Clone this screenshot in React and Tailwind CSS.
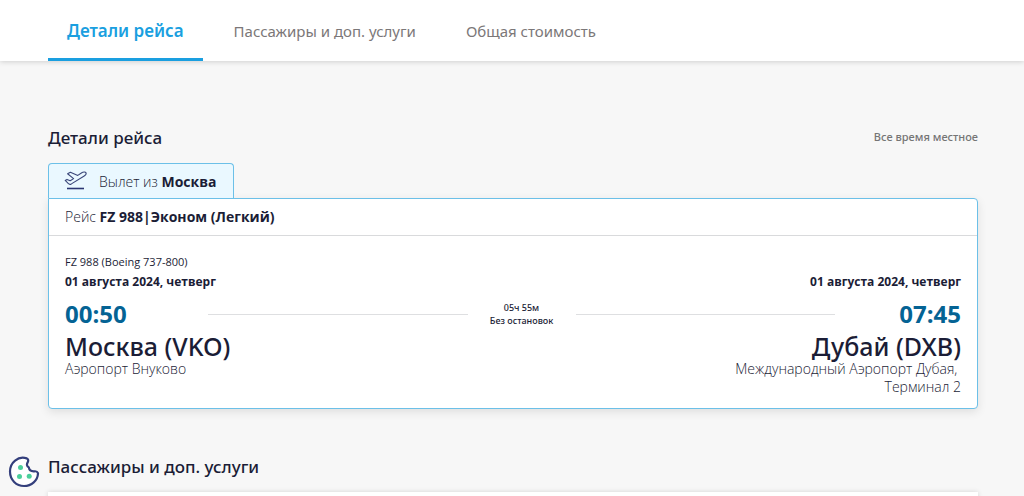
import React, { useState } from "react";

const tabs = ["Детали рейса", "Пассажиры и доп. услуги", "Общая стоимость"];

const flight = {
  number: "FZ 988",
  cabin: "Эконом (Легкий)",
  aircraft: "FZ 988 (Boeing 737-800)",
  duration: "05ч 55м",
  stops: "Без остановок",
  from: {
    date: "01 августа 2024, четверг",
    time: "00:50",
    city: "Москва (VKO)",
  },
  to: {
    date: "01 августа 2024, четверг",
    time: "07:45",
    city: "Дубай (DXB)",
  },
};

const PlaneIcon = () => (
  <svg width="24" height="20" viewBox="0 0 24 20" fill="none" stroke="#3a4679" aria-hidden="true">
    <path
      d="M1.2 9.4 3 8.4 6.2 9.8 9.6 7.6 3.6 2.8 6.4 1.2 13.8 4.4 17.4 2C19.2.8 21.4.6 22 1.7 22.5 2.9 21.4 4.3 20.2 5L7.4 12.9C6.3 13.5 5.2 13.5 4.4 12.7Z"
      strokeWidth="1.1"
      strokeLinejoin="round"
    />
    <path d="M3 17.5H20" stroke="#2b3672" strokeWidth="1.6" />
  </svg>
);

const CookieIcon = () => (
  <svg width="32" height="32" viewBox="0 0 32 32" aria-hidden="true">
    <path
      d="M18.8 2.4C10 -.4 2 6.5 2 15.5C2 24 8.4 30 16 30C23.5 30 29.8 24.5 30 17.2C29.4 15.7 27.9 15.1 26.4 15.3C23.3 15.5 21.2 14.2 20.8 11.4C18.6 10.1 18.5 8.2 19.8 6.1C20.6 4.4 20.1 3 18.8 2.4Z"
      fill="#fff"
      stroke="#343f7c"
      strokeWidth="2.2"
      strokeLinejoin="round"
    />
    <circle cx="12.5" cy="11.5" r="2.5" fill="#4bcf9b" />
    <circle cx="11.5" cy="20.5" r="2.5" fill="#4bcf9b" />
    <circle cx="21.2" cy="20.3" r="2.5" fill="#4bcf9b" />
  </svg>
);

const App = () => {
  const [activeTab, setActiveTab] = useState(0);

  return (
    <div className="min-h-screen bg-[#f7f7f7] font-['Open_Sans',sans-serif] text-[#1b1d36]">
      <header className="bg-white shadow-[0_1px_5px_rgba(0,0,0,0.16)]">
        <nav className="flex gap-3 px-12">
          {tabs.map((tab, i) => (
            <button
              key={tab}
              onClick={() => setActiveTab(i)}
              className={
                activeTab === i
                  ? "border-b-3 border-[#1a9fe0] px-[19px] pt-5 pb-4 font-['Noto_Sans',sans-serif] text-[17px] leading-[22px] font-semibold text-[#1a9fe0]"
                  : "border-b-3 border-transparent px-[19px] pt-5 pb-4 font-['Noto_Sans',sans-serif] text-[15px] leading-[22px] text-[#7b7778]"
              }
            >
              {tab}
            </button>
          ))}
        </nav>
      </header>

      <main className="pt-16 pr-[46px] pl-12">
        <section>
          <div className="flex items-start justify-between">
            <h2 className="font-['Noto_Sans',sans-serif] text-[17px] leading-[26px] font-medium">Детали рейса</h2>
            <p className="font-['Noto_Sans',sans-serif] text-[11px] leading-6 font-medium text-[#757575]">
              Все время местное
            </p>
          </div>

          <div className="mt-3 inline-flex h-[35px] items-center gap-[11px] rounded-t border border-b-0 border-[#6cc0e8] bg-[#eaf8ff] px-[15px] align-top text-[14px]">
            <PlaneIcon />
            <p className="pr-0.5 font-light">
              Вылет из <strong className="font-bold">Москва</strong>
            </p>
          </div>

          <article className="rounded-b-sm rounded-tr-sm border border-[#6cc0e8] bg-white shadow-[0_3px_10px_rgba(0,0,0,0.1)]">
            <p className="border-b border-[#d9dadc] px-4 py-2 text-[14px] leading-5 font-light">
              Рейс <strong className="font-bold">{flight.number}|{flight.cabin}</strong>
            </p>

            <div className="px-4 pt-[17px] pb-3">
              <p className="text-[11px] leading-[18px]">{flight.aircraft}</p>
              <div className="flex justify-between text-[12px] leading-[21px] font-bold">
                <p>{flight.from.date}</p>
                <p>{flight.to.date}</p>
              </div>
              <div className="mt-1 flex items-center justify-between leading-9">
                <p className="w-[143px] text-[24px] font-bold text-[#046394]">{flight.from.time}</p>
                <span className="h-px flex-1 bg-[#dedfe1]" />
                <div className="w-[108px] text-center font-['Noto_Sans',sans-serif] text-[9px] leading-[13px] font-medium">
                  <p>{flight.duration}</p>
                  <p>{flight.stops}</p>
                </div>
                <span className="h-px flex-1 bg-[#dedfe1]" />
                <p className="w-[126px] text-right text-[24px] font-bold text-[#046394]">{flight.to.time}</p>
              </div>
              <div className="flex justify-between font-['Noto_Sans',sans-serif] text-[25px] leading-7 font-medium">
                <p>{flight.from.city}</p>
                <p>{flight.to.city}</p>
              </div>
              <div className="flex justify-between text-[14px] leading-[18px] font-light">
                <p>Аэропорт Внуково</p>
                <p className="text-right">
                  Международный Аэропорт Дубая,&nbsp;
                  <br />
                  Терминал 2
                </p>
              </div>
            </div>
          </article>
        </section>

        <section className="mt-[45px]">
          <h2 className="font-['Noto_Sans',sans-serif] text-[17px] leading-[26px] font-medium">Пассажиры и доп. услуги</h2>
          <div className="mt-3 h-4 bg-white shadow-[0_0_5px_rgba(0,0,0,0.14)]" />
        </section>
      </main>

      <button aria-label="Cookie" className="fixed bottom-2 left-2">
        <CookieIcon />
      </button>
    </div>
  );
};

export default App;
